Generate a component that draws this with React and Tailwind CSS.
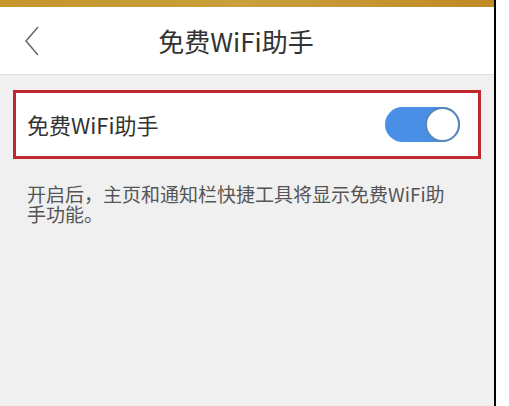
import React, { useState } from "react";

const font = { fontFamily: '"Noto Sans CJK SC", "Noto Sans", sans-serif' };

export default function App() {
    const [on, setOn] = useState(true);

    return (
        <div className="flex h-[406px] w-[509px] bg-white" style={font}>
            <div className="flex w-[494px] flex-col bg-[#f0f0f0]">
                <div className="h-[7px] bg-gradient-to-r from-[#c4962c] via-[#c9a03a] to-[#c08a26]" />

                {/* header */}
                <div className="flex h-[68px] items-center border-b border-[#dedede] bg-white px-[22px]">
                    <button className="flex w-[24px] items-center">
                        <svg width="20" height="32" viewBox="0 0 20 32" fill="none">
                            <path d="M16 2 L4 16 L16 30" stroke="#666" strokeWidth="1.5" />
                        </svg>
                    </button>
                    <h1 className="flex-1 pr-[46px] text-center text-[26px] leading-none text-[#333]">
                        免费WiFi助手
                    </h1>
                </div>

                {/* setting row */}
                <div className="mt-[15px] px-[13px]">
                    <div className="flex h-[69px] items-center justify-between border-[3px] border-[#c0282d] bg-white pl-[11px] pr-[18px]">
                        <span className="text-[22px] text-[#333]">免费WiFi助手</span>
                        <button
                            onClick={() => setOn(!on)}
                            className={`flex h-[35px] w-[75px] items-center rounded-full ${on ? "justify-end bg-[#4a8fe6]" : "justify-start bg-[#ddd]"}`}
                        >
                            <span className="h-[35px] w-[35px] rounded-full border-2 border-[#5b86b8] bg-white" />
                        </button>
                    </div>
                </div>

                <p className="mt-[25px] w-[452px] pl-[27px] text-[19px] leading-[20px] text-[#555]">
                    开启后，主页和通知栏快捷工具将显示免费WiFi助手功能。
                </p>
            </div>
            <div className="w-[2px] bg-black" />
        </div>
    );
}
